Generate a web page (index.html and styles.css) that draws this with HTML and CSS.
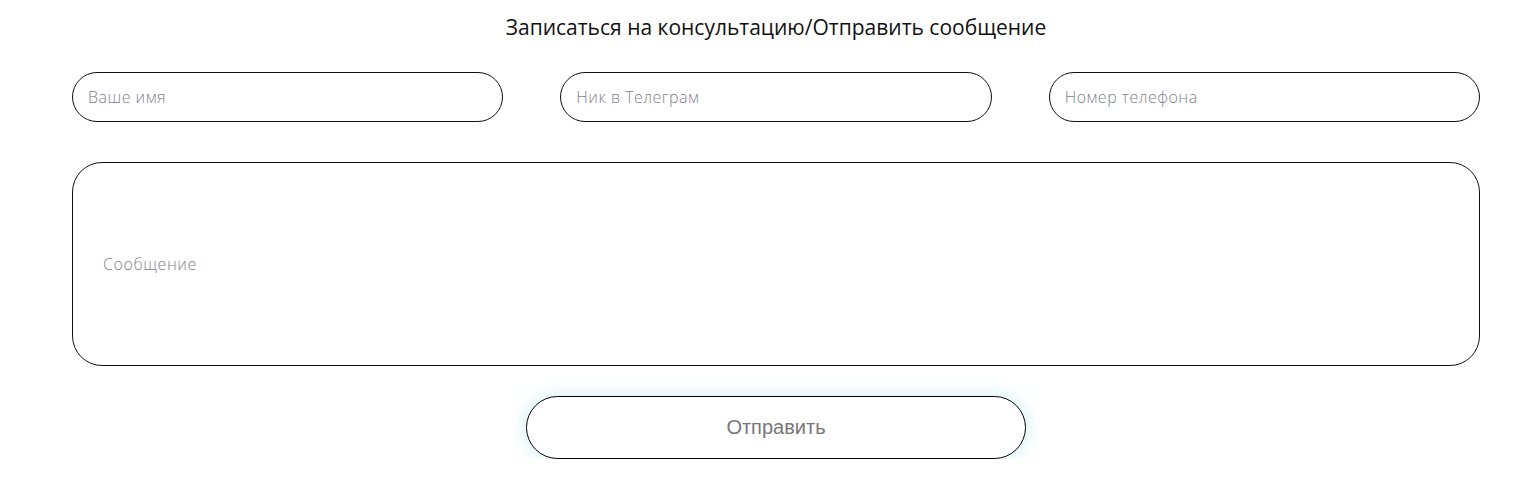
FILE: index.html
```html
<!DOCTYPE html>
<html lang="ru">
<head>
<meta charset="utf-8">
<link rel="stylesheet" href="styles.css">
</head>
<body>
<form class="form">
  <h2 class="title">Записаться на консультацию/Отправить сообщение</h2>
  <div class="row">
    <input class="field" type="text" placeholder="Ваше имя">
    <input class="field" type="text" placeholder="Ник в Телеграм">
    <input class="field" type="text" placeholder="Номер телефона">
  </div>
  <textarea class="message" placeholder="Сообщение"></textarea>
  <div class="actions">
    <button class="submit" type="button">Отправить</button>
  </div>
</form>
</body>
</html>
```
FILE: styles.css
```css
html, body {
  margin: 0;
  padding: 0;
  background: #ffffff;
}
body {
  font-family: "Open Sans", "Noto Sans", sans-serif;
}
.form {
  width: 1408px;
  margin-left: 72px;
  display: flex;
  flex-direction: column;
}
.title {
  margin: 14px 0 0 0;
  text-align: center;
  font-weight: 400;
  font-size: 21px;
  line-height: 26px;
  color: #111;
}
.row {
  display: grid;
  grid-template-columns: repeat(3, 1fr);
  column-gap: 57px;
  margin-top: 32px;
}
.field {
  box-sizing: border-box;
  height: 50px;
  border: 1px solid #111;
  border-radius: 25px;
  padding: 0 15px;
  font-family: inherit;
  font-size: 16px;
  font-weight: 300;
  letter-spacing: 0.5px;
  color: #333;
  outline: none;
  background: #fff;
}
.field::placeholder,
.message::placeholder {
  color: #7f828e;
  opacity: 1;
}
.message {
  box-sizing: border-box;
  margin-top: 40px;
  height: 204px;
  border: 1px solid #111;
  border-radius: 30px;
  padding: 91px 30px 0 30px;
  font-family: inherit;
  font-size: 16px;
  font-weight: 300;
  letter-spacing: 0.6px;
  line-height: 20px;
  resize: none;
  outline: none;
  display: block;
  width: 100%;
}
.actions {
  display: flex;
  justify-content: center;
  margin-top: 30px;
}
.submit {
  box-sizing: border-box;
  width: 500px;
  height: 63px;
  border: 1px solid #000;
  border-radius: 32px;
  background: #fff;
  font-family: "Liberation Sans", Arial, sans-serif;
  font-size: 20px;
  color: #777;
  box-shadow: 0 0 18px rgba(110, 200, 220, 0.35);
  cursor: pointer;
}
```
